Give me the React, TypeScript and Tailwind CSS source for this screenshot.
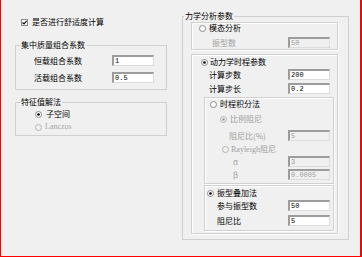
import React from 'react';

const cjk = "font-['Noto_Sans_CJK_SC',sans-serif]";

const Radio = ({ checked, disabled }: { checked?: boolean; disabled?: boolean }) => (
  <svg viewBox="0 0 7 7" className="w-[7px] h-[7px] shrink-0">
    <circle cx="3.5" cy="3.5" r="3" fill={disabled ? '#f0f0f0' : '#ffffff'} stroke={disabled ? '#b4b4b4' : '#8a8a8a'} strokeWidth="1" />
    {checked && <circle cx="3.5" cy="3.5" r="1.3" fill={disabled ? '#a0a0a0' : '#000000'} />}
  </svg>
);

const Checkbox = () => (
  <svg viewBox="0 0 7 7" className="w-[7px] h-[7px] shrink-0">
    <rect x="0.5" y="0.5" width="6" height="6" fill="#ffffff" stroke="#8a8a8a" strokeWidth="1" />
    <path d="M1.5 3.5 L3 5 L5.6 1.8" fill="none" stroke="#000" strokeWidth="1.1" />
  </svg>
);

const Field = ({ value, disabled }: { value: string; disabled?: boolean }) => (
  <div
    className={`w-[42px] h-[11px] shrink-0 border-t-2 border-l-2 border-r border-b border-t-[#9c9c9c] border-l-[#9c9c9c] border-r-[#dcdcdc] border-b-[#dcdcdc] pl-[1px] font-['Liberation_Mono',monospace] text-[7px] leading-[8px] ${
      disabled ? 'bg-[#f0f0f0] text-[#a0a0a0]' : 'bg-white text-black'
    }`}
  >
    {value}
  </div>
);

const Row = ({ label, value, disabled, pl, lw, mt }: { label: string; value: string; disabled?: boolean; pl: string; lw: string; mt: string }) => (
  <div className={`flex items-center h-[11px] ${pl} ${mt}`}>
    <span className={`${lw} shrink-0 ${disabled ? 'text-[#a0a0a0]' : 'text-black'}`}>{label}</span>
    <Field value={value} disabled={disabled} />
  </div>
);

const box = 'border border-[#d0d0d0] shadow-[inset_1px_1px_0_#ffffff,1px_1px_0_#ffffff]';

const App = () => {
  return (
    <div className={`w-[362px] h-[257px] bg-[#f0f0f0] border-l border-r-2 border-b border-[#ff0000] flex text-[8px] leading-[10px] text-black ${cjk}`}>
      {/* left column */}
      <div className="ml-[14px] w-[152px] flex flex-col">
        <div className="mt-[17px] h-[10px] flex items-center pl-[6px] gap-[4px]">
          <Checkbox />
          <span>是否进行舒适度计算</span>
        </div>

        <fieldset className="mt-[13px] border border-[#d0d0d0] pb-[6px] min-w-0">
          <legend className="ml-[4px] px-px leading-[10px]">集中质量组合系数</legend>
          <Row label="恒载组合系数" value="1" pl="pl-[18px]" lw="w-[78px]" mt="mt-[5px]" />
          <Row label="活载组合系数" value="0.5" pl="pl-[18px]" lw="w-[78px]" mt="mt-[6px]" />
        </fieldset>

        <fieldset className="mt-[7px] border border-[#d0d0d0] pb-[3px] min-w-0">
          <legend className="ml-[4px] px-px leading-[10px]">特征值解法</legend>
          <div className="mt-[2px] h-[10px] flex items-center pl-[19px] gap-[4px]">
            <Radio checked />
            <span>子空间</span>
          </div>
          <div className="mt-[3px] h-[10px] flex items-center pl-[19px] gap-[3px] text-[#a8a8a8]">
            <Radio disabled />
            <span className="font-['Liberation_Serif',serif]">Lanczos</span>
          </div>
        </fieldset>
      </div>

      {/* right column */}
      <div className="ml-[15px] w-[167px]">
        <fieldset className="mt-[11px] border border-[#d0d0d0] pb-[5px] min-w-0">
          <legend className="ml-[1px] px-px leading-[10px]">力学分析参数</legend>

          <div className={`mt-[1px] ml-[8px] w-[147px] pb-[1px] ${box}`}>
            <div className="h-[10px] flex items-center pl-[7px] gap-[3px]">
              <Radio />
              <span>模态分析</span>
            </div>
            <Row label="振型数" value="50" disabled pl="pl-[20px]" lw="w-[76px]" mt="mt-[4px]" />
          </div>

          <div className={`mt-[4px] ml-[8px] w-[147px] pt-[2px] pb-[2px] ${box}`}>
            <div className="h-[10px] flex items-center pl-[9px] gap-[2px]">
              <Radio checked />
              <span>动力学时程参数</span>
            </div>
            <Row label="计算步数" value="200" pl="pl-[17px]" lw="w-[79px]" mt="mt-[2px]" />
            <Row label="计算步长" value="0.2" pl="pl-[17px]" lw="w-[79px]" mt="mt-[3px]" />

            <div className={`mt-[3px] ml-[12px] w-[130px] pt-[1px] pb-[3px] ${box}`}>
              <div className="h-[10px] flex items-center pl-[5px] gap-[3px]">
                <Radio />
                <span>时程积分法</span>
              </div>
              <div className="mt-[5px] h-[10px] flex items-center pl-[15px] gap-[3px] text-[#a0a0a0]">
                <Radio checked disabled />
                <span>比例阻尼</span>
              </div>
              <Row label="阻尼比(%)" value="5" disabled pl="pl-[24px]" lw="w-[59px]" mt="mt-[6px]" />
              <div className="mt-[3px] h-[10px] flex items-center pl-[17px] gap-[2px] text-[#a0a0a0]">
                <Radio disabled />
                <span>
                  <span className="font-['Liberation_Serif',serif]">Rayleigh</span>阻尼
                </span>
              </div>
              <Row label="α" value="3" disabled pl="pl-[28px]" lw="w-[55px]" mt="mt-[2px]" />
              <Row label="β" value="0.0005" disabled pl="pl-[28px]" lw="w-[55px]" mt="mt-[2px]" />
            </div>

            <div className={`mt-[1px] ml-[12px] w-[130px] pt-[2px] pb-[4px] ${box}`}>
              <div className="h-[10px] flex items-center pl-[2px] gap-[3px]">
                <Radio checked />
                <span>振型叠加法</span>
              </div>
              <Row label="参与振型数" value="50" pl="pl-[12px]" lw="w-[71px]" mt="mt-[2px]" />
              <Row label="阻尼比" value="5" pl="pl-[12px]" lw="w-[71px]" mt="mt-[4px]" />
            </div>
          </div>
        </fieldset>
      </div>
    </div>
  );
};

export default App;
